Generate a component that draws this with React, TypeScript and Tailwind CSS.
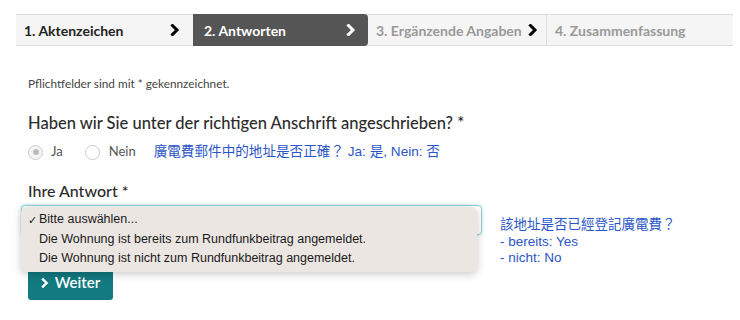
import React from 'react';

const Chevron: React.FC<{ className?: string }> = ({ className }) => (
  <svg viewBox="0 0 10 12" className={className} fill="none" stroke="currentColor" strokeWidth={3} strokeLinecap="square">
    <path d="M2.5 1.5 L7 6 L2.5 10.5" />
  </svg>
);

const steps = [
  { label: '1. Aktenzeichen', state: 'done' },
  { label: '2. Antworten', state: 'active' },
  { label: '3. Ergänzende Angaben', state: 'todo' },
  { label: '4. Zusammenfassung', state: 'last' },
];

const options = [
  'Bitte auswählen...',
  'Die Wohnung ist bereits zum Rundfunkbeitrag angemeldet.',
  'Die Wohnung ist nicht zum Rundfunkbeitrag angemeldet.',
];

export default function App() {
  return (
    <div className="w-[740px] h-[320px] bg-white overflow-hidden font-['Lato',sans-serif] text-[#333]">
      <div className="pt-[14px] pl-4 pr-[7px]">
        <div className="flex h-[32px] border-y border-[#dcdcdc] bg-[#f5f5f5]">
          {steps.map((s, i) => (
            <div
              key={s.label}
              className={`flex items-center text-[14px] font-bold ${
                i === 0 ? 'w-[177px] pl-2 pr-[13px] text-[#222]' : ''
              } ${i === 1 ? 'w-[175px] pl-[11px] pr-[12px] bg-[#555] text-white rounded-r-[4px] -my-px' : ''} ${
                i === 2 ? 'w-[179px] pl-2 pr-[8px] text-[#999] border-r border-[#dcdcdc]' : ''
              } ${i === 3 ? 'flex-1 pl-2 text-[#999]' : ''}`}
            >
              <span className="flex-1 whitespace-nowrap">{s.label}</span>
              {s.state !== 'last' && (
                <Chevron className={`w-[10px] h-[12px] ${s.state === 'active' ? 'text-white' : 'text-black'}`} />
              )}
            </div>
          ))}
        </div>
      </div>

      <div className="pl-[28px]">
        <p className="mt-[30px] text-[11.8px] text-[#444] leading-[16px]">Pflichtfelder sind mit * gekennzeichnet.</p>

        <h2 className="mt-[19px] text-[16.5px] font-medium text-[#2b2b2b] leading-[24px]">
          Haben wir Sie unter der richtigen Anschrift angeschrieben? *
        </h2>

        <div className="mt-[6px] flex items-center h-[22px] text-[13px] text-[#555]">
          <span className="w-[15px] h-[15px] rounded-full border border-[#ccc] bg-[#f4f4f4] flex items-center justify-center">
            <span className="w-[6px] h-[6px] rounded-full bg-[#bbb]" />
          </span>
          <span className="ml-[8px]">Ja</span>
          <span className="ml-[22px] w-[15px] h-[15px] rounded-full border border-[#ccc] bg-white" />
          <span className="ml-[9px]">Nein</span>
          <span className="ml-[18px] text-[13.6px] text-[#2a55c8] font-['Liberation_Sans','Noto_Sans_CJK_TC',sans-serif]">
            廣電費郵件中的地址是否正確？ Ja: 是, Nein: 否
          </span>
        </div>

        <h3 className="mt-[17px] text-[16px] font-medium text-[#2b2b2b] leading-[22px]">Ihre Antwort *</h3>
      </div>

      <div className="flex mt-[3px]">
        <div className="relative ml-[21px] w-[461px]">
          <div className="h-[30px] rounded-[4px] border border-[#8fd0d4] shadow-[0_0_3px_rgba(100,190,200,0.5)] bg-white" />
          <div className="absolute z-10 left-0 top-[2px] w-[456px] rounded-[6px] bg-[#ece6e3] shadow-[0_2px_8px_rgba(0,0,0,0.22)] py-[3px] font-['Liberation_Sans',sans-serif] text-[12.5px] text-[#1a1a1a]">
            {options.map((o, i) => (
              <div key={o} className="flex items-center h-[19.5px]">
                <span className="w-[18px] pl-[7px] text-[11px]">{i === 0 ? '✓' : ''}</span>
                <span>{o}</span>
              </div>
            ))}
          </div>
          <button className="mt-[30px] ml-[7px] h-[35px] w-[85px] rounded-[3px] bg-[#127a80] text-white text-[15px] font-semibold flex items-center justify-center gap-[6px]">
            <Chevron className="w-[8px] h-[10px]" />
            Weiter
          </button>
        </div>
        <div className="ml-[18px] mt-[12px] text-[13.5px] leading-[16.5px] text-[#2a55c8] font-['Liberation_Sans','Noto_Sans_CJK_TC',sans-serif]">
          <div>該地址是否已經登記廣電費？</div>
          <div>- bereits: Yes</div>
          <div>- nicht: No</div>
        </div>
      </div>
    </div>
  );
}
